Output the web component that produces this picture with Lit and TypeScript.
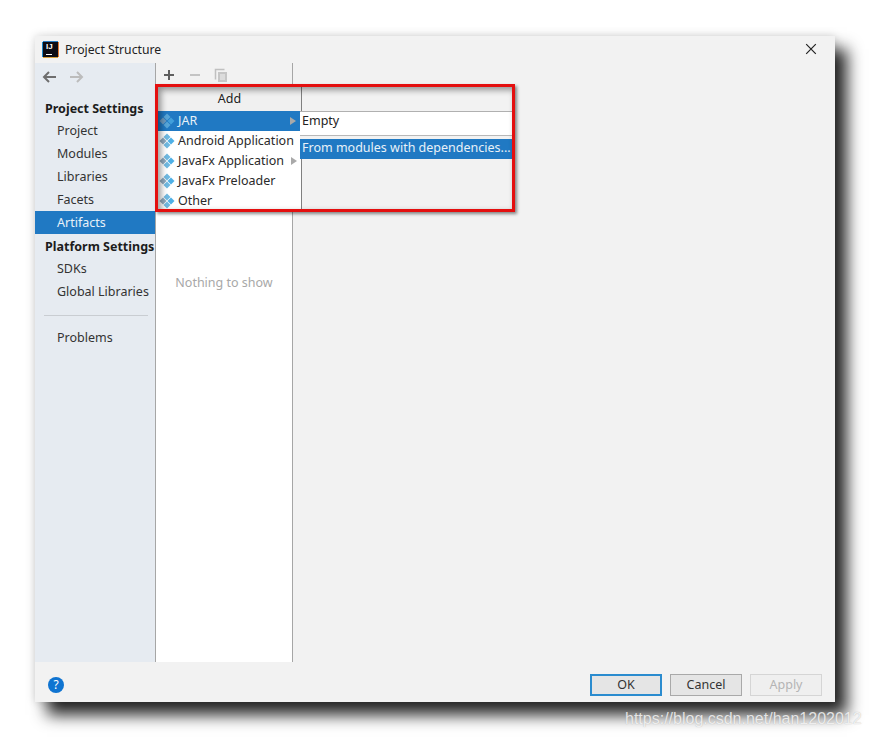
import { LitElement, html, css } from "lit";
import { customElement } from "lit/decorators.js";

const diamond = html`<svg class="dia" viewBox="0 0 16 16" width="16" height="16">
  <path d="M8 .5l3.5 3.5L8 7.5 4.500 4z" fill="#6fb8e0"/>
  <path d="M4 4.500L7.500 8 4 11.500.5 8z" fill="#8fa9bd"/>
  <path d="M12 4.500L15.500 8 12 11.500 8.500 8z" fill="#4fb0e6"/>
  <path d="M8 8.500l3.500 3.500L8 15.500 4.500 12z" fill="#6fb8e0"/>
</svg>`;

@customElement("app-root")
export class AppRoot extends LitElement {
  static styles = css`
    :host { display: block; width: 870px; height: 738px; background: #fff; position: relative; overflow: hidden;
      font-family: "Noto Sans", "Liberation Sans", sans-serif; font-size: 12.5px; color: #222; }
    .stage { padding: 36px 35px 36px; }
    .dialog { width: 800px; height: 666px; background: #f2f2f2; display: flex; flex-direction: column; position: relative;
      box-shadow: 12px 13px 15px rgba(0,0,0,.85), 0 0 9px rgba(0,0,0,.16); }
    .title { height: 27px; display: flex; align-items: center; padding: 0 18px 1px 8px; gap: 7px; flex: none; box-sizing: border-box; }
    .logo { width: 15px; height: 15px; background: #0c0c14; color: #fff; font: bold 8px/9px "Liberation Sans", sans-serif;
      box-shadow: -1px 0 0 #1d88c9, 1px 0 0 #e27b35, 0 -1px 0 #2a7cc0, 0 1px 0 #d9a13a; position: relative; display: block; padding-left: 3px; box-sizing: border-box; }
    .logo::after { content: ""; position: absolute; left: 3px; bottom: 2px; width: 6px; height: 1px; background: #fff; }
    .title-text { flex: 1; font-size: 12.2px; }
    .close { display: block; }
    .body { flex: 1; display: flex; min-height: 0; }
    .side { width: 120px; flex: none; background: #e6ebf1; border-right: 1px solid #a6a6a6; }
    .nav { height: 33px; display: flex; align-items: center; gap: 12px; padding: 0 6px 5px; box-sizing: border-box; }
    .head { height: 23px; line-height: 25px; font-weight: 700; padding-left: 10px; white-space: nowrap; color: #1c1c1c; }
    .item { height: 23px; line-height: 23px; padding-left: 22px; color: #333; }
    .item.sel { background: #2079c3; color: #e8f1f8; }
    .rule { height: 1px; background: #c9cdd2; margin: 12px 0 10px 9px; width: 104px; }
    .mid { width: 136px; flex: none; background: #fff; border-right: 1px solid #a6a6a6; display: flex; flex-direction: column; }
    .tools { height: 24px; background: #f2f2f2; display: flex; align-items: center; gap: 10px; padding-left: 6px; flex: none; }
    .empty { flex: 1; display: flex; justify-content: center; align-items: center; color: #a8a8a8; padding-bottom: 184px; }
    .right { flex: 1; }
    .foot { height: 40px; flex: none; display: flex; align-items: center; padding: 6px 13px 0 13px; gap: 8px; box-sizing: border-box; }
    .help { width: 16px; height: 16px; border-radius: 50%; background: #0f74d1; color: #fff; text-align: center; line-height: 16px; font-size: 12px; margin-right: auto; }
    .btn { width: 72px; height: 22px; box-sizing: border-box; border: 1px solid #a9a9a9; background: #e5e5e5; text-align: center; line-height: 19px; color: #333; }
    .btn.ok { border: 2px solid #2b8ccf; line-height: 17px; }
    .btn.off { background: #efefef; border-color: #d5d5d5; color: #b4b4b4; }

    /* open popup + annotation lying over the panels */
    .pop { position: absolute; left: 121px; top: 51px; width: 357px; height: 123px; }
    .addrow { height: 24px; width: 146px; box-sizing: border-box; border-right: 1px solid #808080; text-align: center; line-height: 23px;
      background: #f0f0f0; color: #222; padding-left: 2px; }
    .menu { width: 146px; height: 99px; background: #fff; box-sizing: border-box; border-right: 1px solid #808080; }
    .mi { height: 20px; display: flex; align-items: center; line-height: 18px; padding-left: 3px; gap: 3px; white-space: nowrap; position: relative; color: #2a2a2a; }
    .mi.sel { background: #2079c3; color: #e8f1f8; width: 144px; box-sizing: border-box; }
    .mi.sel .dia { opacity: .7; }
    .arr { position: absolute; right: 4px; top: 6px; width: 0; height: 0; border-left: 6px solid #a9a9a9; border-top: 4px solid transparent; border-bottom: 4px solid transparent; }
    .sub { position: absolute; left: 144px; top: 24px; width: 213px; background: #f2f2f2; }
    .sub-a { height: 24px; line-height: 18px; background: #fff; padding-left: 2px; border-top: 1px solid #b0b0b0; box-sizing: border-box; }
    .sub-sep { height: 3px; background: #f2f2f2; border-top: 1px solid #b8b8b8; }
    .sub-b { height: 20px; line-height: 18px; background: #2079c3; color: #e8f1f8; padding-left: 2px; white-space: nowrap; }
    .red { position: absolute; left: -1px; top: -3px; width: 360px; height: 128px; box-sizing: border-box; border: 3px solid #e40f0f;
      box-shadow: 2px 2px 3px rgba(0,0,0,.45), inset 3px 3px 6px rgba(0,0,0,.4); pointer-events: none; }
    .mark { position: absolute; left: 625px; top: 710px; font: 16px/18px "Liberation Sans", sans-serif; color: rgba(255,255,255,.78);
      text-shadow: 0 0 1px rgba(120,120,120,.55); white-space: nowrap; }
  `;

  render() {
    return html`<div class="stage">
      <div class="dialog">
        <div class="title">
          <span class="logo">IJ</span>
          <span class="title-text">Project Structure</span>
          <svg class="close" width="12" height="12" viewBox="0 0 12 12"><path d="M1.200 1.200l9.600 9.600M10.800 1.200l-9.600 9.600" stroke="#222" stroke-width="1.200"/></svg>
        </div>
        <div class="body">
          <div class="side">
            <div class="nav">
              <svg width="16" height="14" viewBox="0 0 16 14"><path d="M15 7H3M8 2L3 7l5 5" fill="none" stroke="#6e6e6e" stroke-width="2"/></svg>
              <svg width="16" height="14" viewBox="0 0 16 14"><path d="M1 7h12M8 2l5 5-5 5" fill="none" stroke="#bcbcbc" stroke-width="2"/></svg>
            </div>
            <div class="head">Project Settings</div>
            <div class="item">Project</div>
            <div class="item">Modules</div>
            <div class="item">Libraries</div>
            <div class="item">Facets</div>
            <div class="item sel">Artifacts</div>
            <div class="head">Platform Settings</div>
            <div class="item">SDKs</div>
            <div class="item">Global Libraries</div>
            <div class="rule"></div>
            <div class="item">Problems</div>
          </div>
          <div class="mid">
            <div class="tools">
              <svg width="14" height="14" viewBox="0 0 14 14"><path d="M7 2v10M2 7h10" stroke="#5f5f5f" stroke-width="2"/></svg>
              <svg width="14" height="14" viewBox="0 0 14 14" style="margin-left:2px"><path d="M2 7h10" stroke="#c4c4c4" stroke-width="2"/></svg>
              <svg width="16" height="16" viewBox="0 0 16 16" style="margin-left:1px"><path d="M2.500 12.500V2.500h9" fill="none" stroke="#c0c0c0" stroke-width="1.500"/><path d="M5 5h9v10H5z" fill="#c6c6c6"/><path d="M7 8h5M7 10h5M7 12h5" stroke="#f2f2f2"/></svg>
            </div>
            <div class="empty">Nothing to show</div>
          </div>
          <div class="right"></div>
        </div>
        <div class="foot">
          <div class="help">?</div>
          <div class="btn ok">OK</div>
          <div class="btn">Cancel</div>
          <div class="btn off">Apply</div>
        </div>
        <div class="pop">
          <div class="addrow">Add</div>
          <div class="menu">
            <div class="mi sel">${diamond}JAR<span class="arr"></span></div>
            <div class="mi">${diamond}Android Application</div>
            <div class="mi">${diamond}JavaFx Application<span class="arr"></span></div>
            <div class="mi">${diamond}JavaFx Preloader</div>
            <div class="mi">${diamond}Other</div>
          </div>
          <div class="sub">
            <div class="sub-a">Empty</div>
            <div class="sub-sep"></div>
            <div class="sub-b">From modules with dependencies...</div>
          </div>
          <div class="red"></div>
        </div>
      </div>
    </div>
    <div class="mark">https://blog.csdn.net/han1202012</div>`;
  }
}
